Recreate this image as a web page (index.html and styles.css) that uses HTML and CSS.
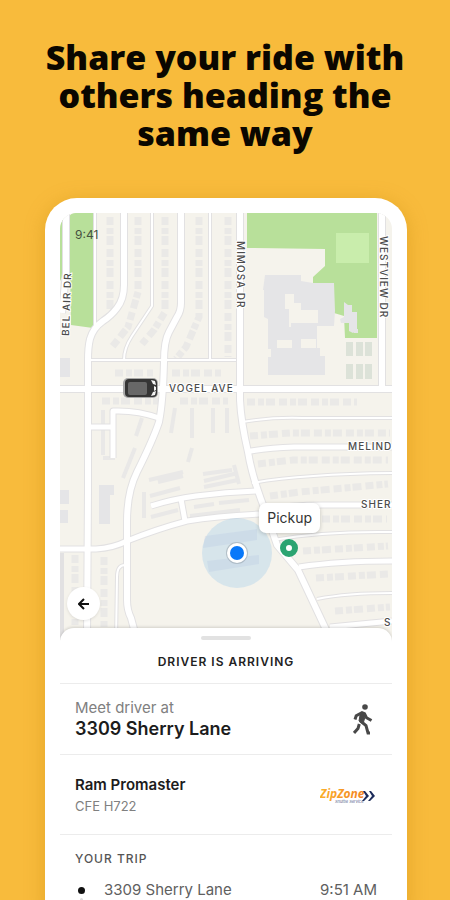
FILE: index.html
```html
<!DOCTYPE html>
<html lang="en">
<head>
    <meta charset="UTF-8">
    <meta name="viewport" content="width=device-width, initial-scale=1.0">
    <title>Share your ride</title>
    <link rel="stylesheet" href="styles.css">
</head>
<body>
    <main class="promo">
        <h1>Share your ride with others heading the same way</h1>

        <div class="phone">
            <div class="map">
                <svg class="map-canvas" viewBox="60 213 332 427" preserveAspectRatio="xMidYMin slice" role="img" aria-label="Map">
                    <rect class="land" x="0" y="0" width="460" height="900"/>

                    <!-- parks -->
                    <path class="park" d="M60 222l4-5v56l-4 8zM69 217q2-4 6-4h19l-1 115-22-3z"/>
                    <path class="park" d="M247 213h130v125h-32l-1-22-10-3-1-29h-20v-7l12-11v-17l-78-1z"/>
                    <path class="park-light" d="M336 233h33v30h-33z"/>

                    <!-- large buildings -->
                    <path class="building" fill-rule="evenodd" d="M265 275h36v6l12 2h21l1 28-1 15h-17v22h3v8h5v19h-57v-18h3v-8h-3v-30l-4-2v-27h-1zM285 294v15h4v18h2v-4h27v-13h-17v-7h-7v-9zM277 340v8h15v-8zM301 339v9h15v-9z"/>
                    <path class="building" d="M344 302l4 3h4v7h5v18l-4 3-4-2v-8h-8l-1-4 4-2zM354 329h4v4h-4z"/>
                    <path class="court" d="M346 342h7v14h-7zM356 342h7v14h-7zM365 342h7v14h-7zM346 364h7v15h-7zM356 364h7v15h-7zM365 364h7v15h-7z"/>
                    <path class="building" d="M60 358h10v19h-10zM99 485h15v10h-4v29h-11zM60 490h9v14h-9zM60 510h8v13h-8zM205 536l52-7v11l-54 8zM207 561l52-6v9l-50 8z"/>

                    <!-- houses -->
                    <g class="houses">
                        <path d="M110 217v100M138 217v75l-10 35-16 20M165 217v95l-11 18-12 14M199 217v100l-13 30-10 12M228 217v140"/>
                        <path d="M115 373h38M172 373h50M102 401h62M180 401h48M247 402h110M250 436l40-3h100M258 464l35-4h95M270 496l30-4 88-8M322 519h65M303 551l85-5M316 578l72-4M335 611l55-4M75 555v70M104 557v70"/>
                    </g>
                    <g class="flats">
                        <path d="M103 410v45M123 478l12-30M175 408l-4 25M192 408v30M213 408v25M227 408v25M103 458h12M142 418l-6 18M158 482l25-6M188 462l4-14M203 474l29-4M149 480l34-8M144 492v26M151 517l27-7M150 496l30-8M204 481l34-8M204 487l34-7M194 507l20-3M219 503l30-3M190 516l50-6M234 465l5 19"/>
                    </g>

                    <!-- streets: grey casing below, white on top -->
                    <g class="casing">
                        <path class="wide" d="M66 213v60l-4 40M124 213v72q0 14-7 23-6 8-14 13-10 7-13 18-2 8-2 21v130l-1 150M181 213v90q0 8-4 14l-8 15q-5 9-5 30-1 40-5 60-6 18-22 50-10 20-10 50v78q0 10 4 18l6 22M240 213v187q1 22 8 52 4 25 17 58l12 35 21 25 31 66M60 389h332M382 213v175"/>
                        <path class="mid" d="M89 427h24M113 458v-47q24-1 46 7M60 549h36q17-1 31-8 30-12 60-20 30-5 72-7M151 506q22-7 45-10 30-4 60-5M181 499l4 22M246 452q20-4 48-5h98M262 510q30-5 60-5h70M299 567q40-6 93-6M330 627q30-3 62-6"/>
                        <path class="thin" d="M95 213v117M152 213v93l-20 30q-8 12-8 24M210 213v147M91 360h145M242 422q30-5 60-4h90M252 483q50-9 140-10M273 540q50-9 119-8M317 599q30-6 75-6M125 565q-8 0-8 12l-1 65M62 553v88"/>
                    </g>
                    <g class="street">
                        <path class="wide" d="M66 213v60l-4 40M124 213v72q0 14-7 23-6 8-14 13-10 7-13 18-2 8-2 21v130l-1 150M181 213v90q0 8-4 14l-8 15q-5 9-5 30-1 40-5 60-6 18-22 50-10 20-10 50v78q0 10 4 18l6 22M240 213v187q1 22 8 52 4 25 17 58l12 35 21 25 31 66M60 389h332M382 213v175"/>
                        <path class="mid" d="M89 427h24M113 458v-47q24-1 46 7M60 549h36q17-1 31-8 30-12 60-20 30-5 72-7M151 506q22-7 45-10 30-4 60-5M181 499l4 22M246 452q20-4 48-5h98M262 510q30-5 60-5h70M299 567q40-6 93-6M330 627q30-3 62-6"/>
                        <path class="thin" d="M95 213v117M152 213v93l-20 30q-8 12-8 24M210 213v147M91 360h145M242 422q30-5 60-4h90M252 483q50-9 140-10M273 540q50-9 119-8M317 599q30-6 75-6M125 565q-8 0-8 12l-1 65"/>
                    </g>

                    <!-- street names -->
                    <g class="street-name">
                        <text x="169" y="392">VOGEL AVE</text>
                        <text x="348" y="450">MELIND</text>
                        <text x="361" y="508">SHER</text>
                        <text x="384" y="626">S</text>
                        <text transform="translate(237 241) rotate(90)">MIMOSA DR</text>
                        <text transform="translate(380 236) rotate(90)">WESTVIEW DR</text>
                        <text transform="translate(69 336) rotate(-88)">BEL AIR DR</text>
                    </g>

                    <!-- van -->
                    <rect x="123" y="378" width="35" height="20" rx="5" fill="#a9a9a9"/>
                    <rect x="125" y="379" width="32" height="18" rx="4" fill="#353535"/>
                    <rect x="128" y="382" width="19" height="13" rx="2" fill="#686868"/>
                    <path d="M151 380l4 1 1 4-3-1zM151 396l4-1 1-4-3 1zM154 386l2 1v3l-2 1z" fill="#f4f4f4"/>

                    <!-- current position and pickup -->
                    <circle cx="237" cy="553" r="35" fill="#a9d0ec" fill-opacity=".4"/>
                    <circle cx="237" cy="553" r="11" fill="#8f9ba5" fill-opacity=".5"/>
                    <circle cx="237" cy="553" r="10" fill="#fff"/>
                    <circle cx="237" cy="553" r="7" fill="#0878f9"/>
                    <circle cx="289" cy="548" r="6" fill="#fff" stroke="#2ba471" stroke-width="6"/>
                </svg>
                <span class="clock">9:41</span>
                <span class="pickup">Pickup</span>
                <button class="back" type="button" aria-label="Back">
                    <svg viewBox="0 0 12 12" width="12" height="12"><path d="M11 6H2M6 1L1 6l5 5"/></svg>
                </button>
            </div>

            <div class="sheet">
                <div class="handle"></div>
                <h2>DRIVER IS ARRIVING</h2>
                <section class="row">
                    <div>
                        <p class="label">Meet driver at</p>
                        <p class="address">3309 Sherry Lane</p>
                    </div>
                    <svg class="walk" viewBox="0 0 20 31" width="20" height="31" aria-hidden="true">
                        <circle cx="12" cy="3" r="2.8"/>
                        <path class="torso" d="M7.500 8.500L6 17l4 3 2.500-9z"/>
                        <path d="M2 15.500l1.200-3.700L9 8.700l2.500 1 2 4 5 2.800M7.500 17l5.500 4.500 2 7.500h2M6.300 20L5 24.500 1 29"/>
                    </svg>
                </section>
                <section class="row vehicle">
                    <div>
                        <p class="car">Ram Promaster</p>
                        <p class="plate">CFE H722</p>
                    </div>
                    <svg class="logo" viewBox="0 0 56 18" width="56" height="18" role="img" aria-label="ZipZone">
                        <defs>
                            <linearGradient id="zip" x1="0" x2="1" y1="0" y2="0">
                                <stop offset="0" stop-color="#fbb02a"/>
                                <stop offset="1" stop-color="#f28223"/>
                            </linearGradient>
                        </defs>
                        <text class="logo-name" x="0" y="12" fill="url(#zip)">ZipZone</text>
                        <text class="logo-sub" x="15" y="17">Shuttle Service</text>
                        <path d="M43 5h2l4 5-5 5h-2l4-5zM49 5h2l4 5-5 5h-2l4-5z" fill="#1d2c5b"/>
                    </svg>
                </section>
                <section class="trip">
                    <h3>YOUR TRIP</h3>
                    <div class="stop">
                        <span class="dot"></span>
                        <span class="place">3309 Sherry Lane</span>
                        <time>9:51 AM</time>
                    </div>
                </section>
            </div>
        </div>
    </main>
</body>
</html>
```
FILE: styles.css
```css
* {
    box-sizing: border-box;
}
body {
    margin: 0;
    background-color: #f8bb3c;
    font-family: Inter, "Liberation Sans", sans-serif;
}
h1, h2, h3, p {
    margin: 0;
}
.promo {
    display: flex;
    flex-direction: column;
    height: 100vh;
    overflow: hidden;
    padding-top: 38px;
}
h1 {
    padding: 0 30px;
    font-family: "Open Sans", "Noto Sans", sans-serif;
    font-size: 34px;
    font-weight: 800;
    line-height: 38px;
    text-align: center;
    color: #0b0700;
    margin-bottom: 46px;
}
.phone {
    flex: none;
    margin: 0 43px 0 45px;
    padding: 15px 15px 24px;
    background-color: #fff;
    border-radius: 32px;
    box-shadow: 0 4px 20px rgba(190, 125, 0, 0.35);
}

/* Map */
.map {
    position: relative;
}
.map-canvas {
    display: block;
    width: 100%;
    border-radius: 16px 16px 0 0;
}
.land {
    fill: #f5f3ec;
}
.park {
    fill: #b8e09a;
}
.park-light {
    fill: #c9edac;
}
.building {
    fill: #e5e5e7;
}
.court {
    fill: #dce2d8;
}
.houses {
    fill: none;
    stroke: #eae9e7;
    stroke-width: 7;
    stroke-dasharray: 8 3 6 2 9 4;
}
.flats {
    fill: none;
    stroke: #e9e8e7;
    stroke-width: 4;
}
.casing, .street {
    fill: none;
    stroke-linejoin: round;
}
.casing {
    stroke: #e2e1e2;
}
.street {
    stroke: #fff;
}
.casing .wide {
    stroke-width: 8;
}
.casing .mid {
    stroke-width: 7;
}
.casing .thin {
    stroke-width: 4;
}
.street .wide {
    stroke-width: 6;
}
.street .mid {
    stroke-width: 5;
}
.street .thin {
    stroke-width: 2;
}
.street-name {
    font-size: 10px;
    font-weight: 500;
    letter-spacing: 1px;
    fill: #4c4c4c;
    stroke: #fff;
    stroke-width: 2;
    paint-order: stroke;
}
.clock {
    position: absolute;
    top: 14px;
    left: 15px;
    font-size: 12px;
    line-height: 16px;
    color: #46513f;
}
.pickup {
    position: absolute;
    top: 68%;
    left: 60%;
    padding: 6px 8px;
    border-radius: 7px;
    background-color: #fff;
    box-shadow: 0 1px 4px rgba(0, 0, 0, 0.2);
    font-size: 14px;
    line-height: 18px;
    color: #333;
}
.back {
    position: absolute;
    left: 7px;
    bottom: 20px;
    display: flex;
    align-items: center;
    justify-content: center;
    width: 33px;
    height: 33px;
    padding: 0;
    border: none;
    border-radius: 50%;
    background-color: #fff;
    box-shadow: 0 1px 3px rgba(0, 0, 0, 0.1);
    cursor: pointer;
}
.back path {
    fill: none;
    stroke: #111;
    stroke-width: 2;
}

/* Bottom sheet */
.sheet {
    position: relative;
    margin-top: -12px;
    padding-top: 8px;
    background-color: #fff;
    border-radius: 14px 14px 0 0;
    box-shadow: 0 -1px 3px rgba(0, 0, 0, 0.15);
    clip-path: inset(-4px 0 0 0);
}
.handle {
    width: 50px;
    height: 4px;
    margin: 0 auto;
    background-color: #e2e2e2;
    border-radius: 2px;
}
h2 {
    padding: 12px 0 11px;
    font-size: 12px;
    font-weight: 600;
    line-height: 20px;
    letter-spacing: 1px;
    text-align: center;
    color: #222;
}
.row {
    display: flex;
    align-items: center;
    justify-content: space-between;
    height: 71px;
    padding: 0 19px 0 15px;
    border-top: 1px solid #ececec;
}
.label {
    font-size: 15px;
    line-height: 20px;
    color: #808080;
}
.address {
    font-size: 18px;
    font-weight: 600;
    line-height: 22px;
    color: #1c1c1c;
}
.walk {
    fill: #484848;
}
.walk path {
    fill: none;
    stroke: #484848;
    stroke-width: 3;
}
.walk .torso {
    fill: #484848;
    stroke-width: 1;
}
.vehicle {
    height: 80px;
    padding-right: 16px;
}
.car {
    font-size: 15px;
    font-weight: 600;
    line-height: 22px;
    color: #1c1c1c;
}
.plate {
    font-size: 13px;
    line-height: 20px;
    color: #808080;
}
.logo-name {
    font-family: "Open Sans", sans-serif;
    font-size: 12px;
    font-weight: 700;
    font-style: italic;
}
.logo-sub {
    font-size: 4px;
    font-style: italic;
    fill: #53618a;
}
.trip {
    padding: 14px 15px 0;
    border-top: 1px solid #ececec;
}
h3 {
    font-size: 12px;
    font-weight: 500;
    line-height: 20px;
    letter-spacing: 1px;
    color: #555;
}
.stop {
    display: flex;
    align-items: center;
    padding: 10px 0;
    font-size: 15px;
    line-height: 22px;
    color: #606060;
}
.dot {
    width: 7px;
    height: 7px;
    margin: 0 19px 0 3px;
    border-radius: 50%;
    background-color: #111;
    box-shadow: 0 9px 0 -2px #ddd;
}
.place {
    flex: 1;
}
```
